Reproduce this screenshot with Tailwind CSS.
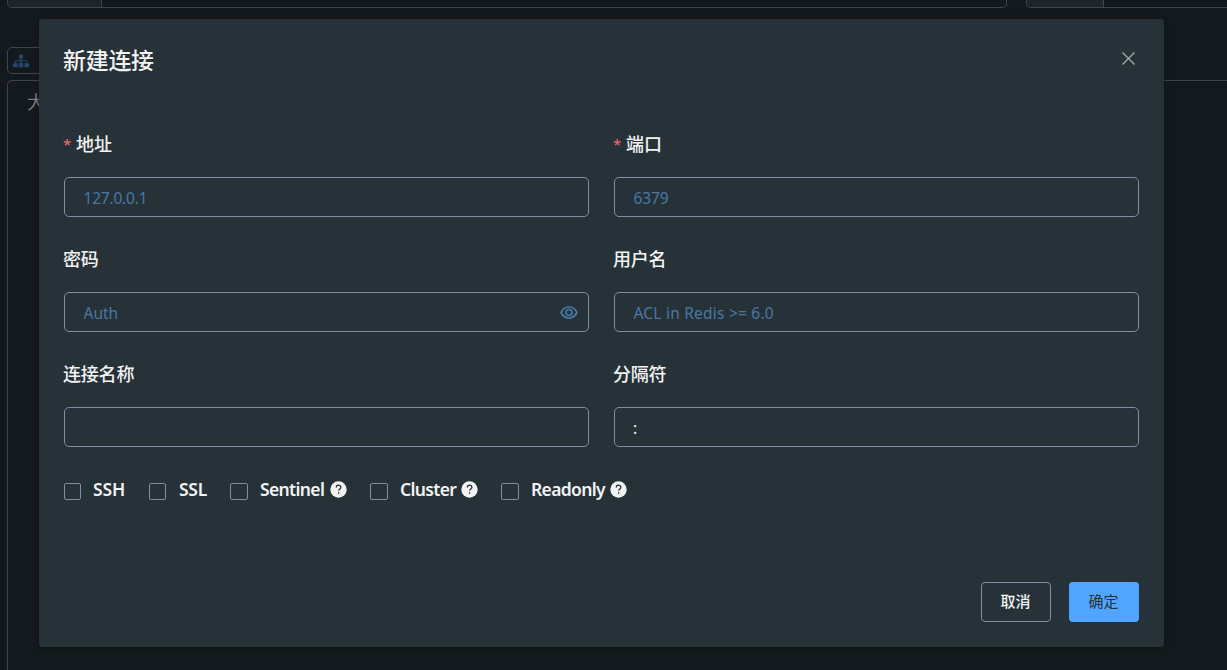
<!DOCTYPE html>
<html lang="zh-CN">
<head>
    <meta charset="UTF-8">
    <meta name="viewport" content="width=device-width, initial-scale=1.0">
    <title>新建连接</title>
    <script src="https://cdn.jsdelivr.net/npm/@tailwindcss/browser@4"></script>
</head>
<body class="relative h-screen overflow-hidden bg-[#13191c] font-['Noto_Sans','Noto_Sans_CJK_SC',sans-serif] text-[#f3f3f4]">

    <!-- Page behind the dialog -->
    <div class="flex h-screen flex-col pl-[7px]">
        <div class="flex h-2 shrink-0 gap-[19px]">
            <div class="flex w-[1000px] rounded-b-[5px] border border-t-0 border-[#40444f]">
                <div class="w-[94px] rounded-bl-[4px] border-r border-[#40444f] bg-[#1d2528]"></div>
            </div>
            <div class="flex flex-1 rounded-bl-[5px] border-b border-l border-[#40444f]">
                <div class="w-[77px] rounded-bl-[4px] border-r border-[#40444f] bg-[#1d2528]"></div>
            </div>
        </div>
        <div class="mt-[39px] flex h-[27px] w-[100px] shrink-0 items-center rounded-[5px] border border-[#40444f] pl-[5px]">
            <svg class="h-[14px] w-4" viewBox="0 0 16 14" fill="#26476a">
                <path d="M6 0.500h4v4H8.600v1.700h5.600v3H16v4h-4.500v-4h1.600V7.300H8.600v1.900h1.700v4H5.700v-4h1.700V7.300H2.900v1.900h1.600v4H0v-4h1.800v-3h5.600V4.500H6z"/>
            </svg>
        </div>
        <div class="mt-1.5 flex-1 rounded-tl-[5px] border-t border-l border-[#40444f] pt-[8px] pl-[19px]">
            <span class="text-lg leading-[26px] text-[#7a7c7e]">大小</span>
        </div>
    </div>

    <!-- New connection dialog -->
    <div class="absolute top-[19px] left-[39px] flex h-[628px] w-[1125px] flex-col rounded-[3px] bg-[#263238] px-[25px] shadow-[0_1px_4px_rgba(0,0,0,0.35)]">
        <div class="flex justify-between pt-[25px]">
            <h1 class="-ml-px text-[23px] leading-8 font-medium tracking-[-0.3px]">新建连接</h1>
            <svg class="mt-[8px] mr-1 h-[13px] w-[13px]" viewBox="0 0 13 13" fill="none" stroke="#a3a8ad" stroke-width="1.4">
                <path d="M0.500 0.500L12.500 12.500M12.500 0.500L0.500 12.500"/>
            </svg>
        </div>

        <form class="mt-[51px] flex flex-1 flex-col">
            <div class="grid grid-cols-2 gap-x-[25px] gap-y-[25px] text-[15.500px]">
                <div class="h-[90px]">
                    <label class="-ml-px flex h-[34px] items-center text-[18px] font-medium tracking-[-0.2px]"><span class="mr-[5px] text-[15px] font-normal text-[#f56c6c]">*</span>地址</label>
                    <input type="text" placeholder="127.0.0.1" class="mt-4 block h-10 w-full rounded-[5px] border border-[#7f8ea5] pt-0.5 pl-[18.500px] tracking-[-0.2px] placeholder:text-[#4878a4]">
                </div>
                <div class="h-[90px]">
                    <label class="-ml-px flex h-[34px] items-center text-[18px] font-medium tracking-[-0.2px]"><span class="mr-[5px] text-[15px] font-normal text-[#f56c6c]">*</span>端口</label>
                    <input type="text" placeholder="6379" class="mt-4 block h-10 w-full rounded-[5px] border border-[#7f8ea5] pt-0.5 pl-[18.500px] tracking-[-0.1px] placeholder:text-[#4878a4]">
                </div>
                <div class="h-[90px]">
                    <label class="-ml-px flex h-[34px] items-center pt-px text-[18px] font-medium tracking-[-0.2px]">密码</label>
                    <div class="mt-4 flex h-10 items-center rounded-[5px] border border-[#7f8ea5] pr-[10px] pl-[18.500px]">
                        <input type="password" placeholder="Auth" class="h-full min-w-0 flex-1 pt-0.5 placeholder:text-[#4878a4]">
                        <svg class="h-[13px] w-[18px]" viewBox="0 0 18 13" fill="none" stroke="#467ba8" stroke-width="1.7">
                            <path d="M1 6.500C2.800 3 5.600 1 9 1s6.200 2 8 5.500C15.200 10 12.400 12 9 12S2.800 10 1 6.500z"/>
                            <circle cx="9" cy="6.500" r="3"/>
                        </svg>
                    </div>
                </div>
                <div class="h-[90px]">
                    <label class="-ml-px flex h-[34px] items-center pt-px text-[18px] font-medium tracking-[-0.2px]">用户名</label>
                    <input type="text" placeholder="ACL in Redis &gt;= 6.0" class="mt-4 block h-10 w-full rounded-[5px] border border-[#7f8ea5] pt-0.5 pl-[18.500px] tracking-[0.22px] placeholder:text-[#4878a4]">
                </div>
                <div class="h-[90px]">
                    <label class="-ml-px flex h-[34px] items-center pt-px text-[18px] font-medium tracking-[-0.2px]">连接名称</label>
                    <input type="text" class="mt-4 block h-10 w-full rounded-[5px] border border-[#7f8ea5] pt-0.5 pl-[18.500px]">
                </div>
                <div class="h-[90px]">
                    <label class="-ml-px flex h-[34px] items-center pt-px text-[18px] font-medium tracking-[-0.2px]">分隔符</label>
                    <input type="text" value=":" class="mt-4 block h-10 w-full rounded-[5px] border border-[#7f8ea5] pt-0.5 pl-[18px]">
                </div>
            </div>

            <!-- Connection options -->
            <div class="mt-[29px] flex h-[26px] text-[17.500px] leading-[26px] font-semibold tracking-[-0.65px]">
                <label class="flex w-[85px] items-center tracking-[-0.1px]">
                    <span class="mt-[5px] mr-3 h-[17px] w-[17px] shrink-0 rounded-[2px] border border-[#7f8ea5]"></span>SSH
                </label>
                <label class="flex w-[81px] items-center tracking-[-0.3px]">
                    <span class="mt-[5px] mr-[13px] h-[17px] w-[17px] shrink-0 rounded-[2px] border border-[#7f8ea5]"></span>SSL
                </label>
                <label class="flex w-[140px] items-center">
                    <span class="mt-[5px] mr-3 h-[17px] w-[18px] shrink-0 rounded-[2px] border border-[#7f8ea5]"></span>
                    <span class="w-[70px]">Sentinel</span>
                    <svg class="h-[17px] w-[17px]" viewBox="0 0 17 17">
                        <circle cx="8.500" cy="8.500" r="8.200" fill="#f3f3f4"/>
                        <path d="M6.300 6.400C6.300 3.500 10.900 3.500 10.900 6.300C10.900 8 8.600 8 8.600 9.800M8.600 11.300v1.500" fill="none" stroke="#263238" stroke-width="1.3"/>
                    </svg>
                </label>
                <label class="flex w-[131px] items-center">
                    <span class="mt-[5px] mr-3 h-[17px] w-[18px] shrink-0 rounded-[2px] border border-[#7f8ea5]"></span>
                    <span class="w-[61px]">Cluster</span>
                    <svg class="h-[17px] w-[17px]" viewBox="0 0 17 17">
                        <circle cx="8.500" cy="8.500" r="8.200" fill="#f3f3f4"/>
                        <path d="M6.300 6.400C6.300 3.500 10.900 3.500 10.900 6.300C10.900 8 8.600 8 8.600 9.800M8.600 11.300v1.500" fill="none" stroke="#263238" stroke-width="1.3"/>
                    </svg>
                </label>
                <label class="flex items-center">
                    <span class="mt-[5px] mr-3 h-[17px] w-[18px] shrink-0 rounded-[2px] border border-[#7f8ea5]"></span>
                    <span class="w-[79px]">Readonly</span>
                    <svg class="h-[17px] w-[17px]" viewBox="0 0 17 17">
                        <circle cx="8.500" cy="8.500" r="8.200" fill="#f3f3f4"/>
                        <path d="M6.300 6.400C6.300 3.500 10.900 3.500 10.900 6.300C10.900 8 8.600 8 8.600 9.800M8.600 11.300v1.500" fill="none" stroke="#263238" stroke-width="1.3"/>
                    </svg>
                </label>
            </div>

            <!-- Actions -->
            <div class="mt-auto mb-[25px] flex justify-end gap-[18px] text-[15px]">
                <button type="button" class="h-10 w-[70px] rounded border border-[#7f8ea5] pr-px pb-0.5 font-medium">取消</button>
                <button type="submit" class="h-10 w-[70px] rounded bg-[#52a5ff] pr-px pb-0.5 text-[#263238]">确定</button>
            </div>
        </form>
    </div>

</body>
</html>
